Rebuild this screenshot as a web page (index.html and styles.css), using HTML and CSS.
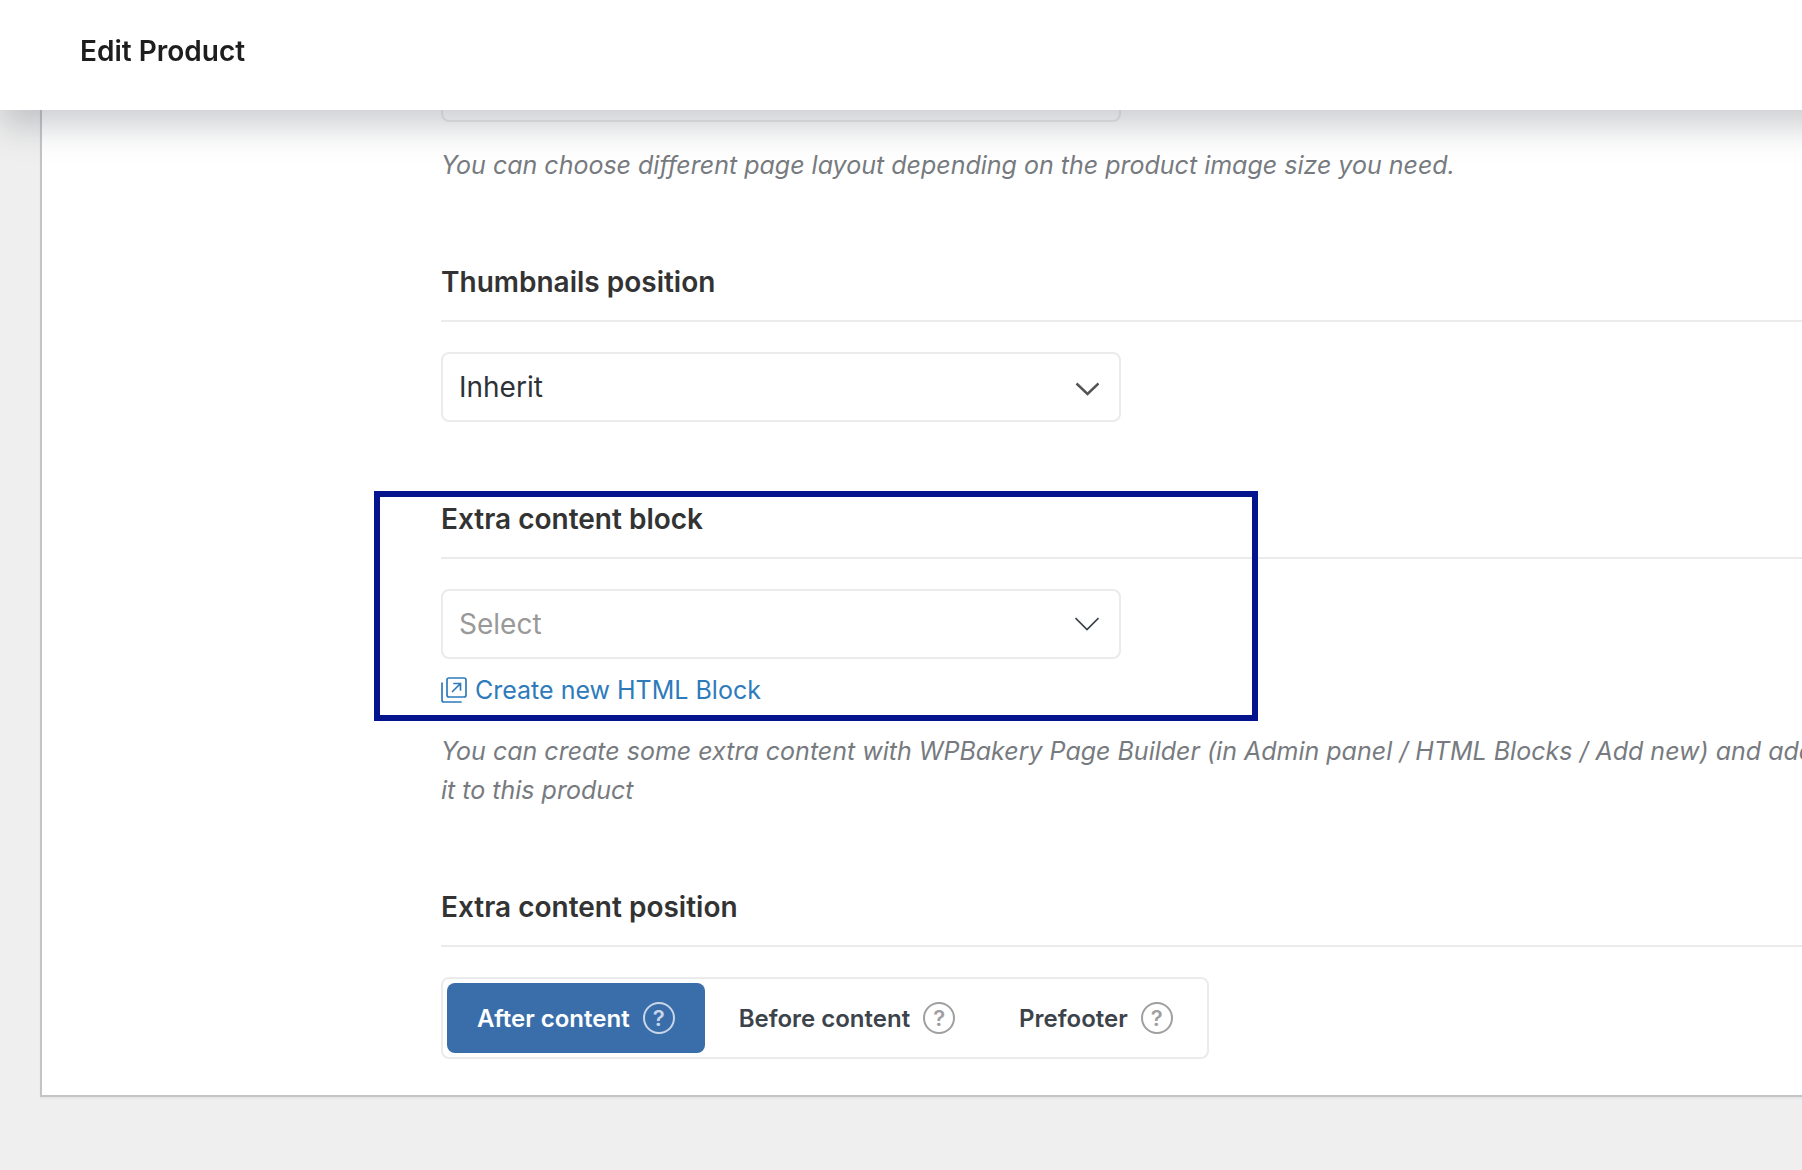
FILE: index.html
```html
<!DOCTYPE html>
<html lang="en">
<head>
<meta charset="utf-8">
<meta name="viewport" content="width=device-width, initial-scale=1">
<title>Edit Product</title>
<link rel="stylesheet" href="styles.css">
</head>
<body>
<header class="topbar">
  <h1 class="topbar-title">Edit Product</h1>
</header>
<main class="page">
  <form class="panel">
    <section class="field">
      <div class="select-wrap">
        <select class="select" aria-label="Product page layout"><option></option></select>
      </div>
      <p class="description">You can choose different page layout depending on the product image size you need.</p>
    </section>

    <section class="field">
      <label class="field-title" for="thumbs">Thumbnails position</label>
      <div class="select-wrap">
        <select class="select" id="thumbs"><option>Inherit</option></select>
        <svg class="chevron chevron-soft" viewBox="0 0 24 14" aria-hidden="true"><path d="M1.500 1.500 12.500 12 23.500 1.500"/></svg>
      </div>
    </section>

    <section class="field field-highlighted">
      <label class="field-title" for="block">Extra content block</label>
      <div class="select-wrap">
        <select class="select select-empty" id="block"><option>Select</option></select>
        <svg class="chevron" viewBox="0 0 24 14" aria-hidden="true"><path d="M.5 1 12 12.500 23.500 1"/></svg>
      </div>
      <a class="create-link" href="#">
        <svg class="link-icon" viewBox="0 0 26 26" aria-hidden="true">
          <rect x="6" y="1" width="19" height="19" rx="2"/>
          <path d="M1 6v17a2 2 0 0 0 2 2h17M11.500 14.500l8-8M13 6.500h6.500v6.500"/>
        </svg>
        <span>Create new HTML Block</span>
      </a>
      <p class="description">You can create some extra content with WPBakery Page Builder (in Admin panel / HTML Blocks / Add new) and add it to this product</p>
    </section>

    <section class="field">
      <h2 class="field-title">Extra content position</h2>
      <div class="button-set">
        <button class="option option-active" type="button">After content <span class="help">?</span></button>
        <button class="option" type="button">Before content <span class="help">?</span></button>
        <button class="option" type="button">Prefooter <span class="help">?</span></button>
      </div>
    </section>
  </form>
</main>
</body>
</html>
```
FILE: styles.css
```css
*,
*::after {
  box-sizing: border-box;
}

body {
  margin: 0;
  background: #efefef;
  color: #333;
  font-family: Inter, "Liberation Sans", sans-serif;
  overflow-x: hidden;
}

.topbar {
  position: fixed;
  top: 0;
  left: 0;
  right: -60px;
  z-index: 2;
  display: flex;
  align-items: center;
  height: 110px;
  padding: 0 80px 8px;
  background: #fff;
  box-shadow: 0 16px 32px rgba(85, 93, 102, 0.3);
}

.topbar-title {
  margin: 0;
  color: #1e1e1e;
  font-size: 28px;
  font-weight: 600;
  line-height: 40px;
}

.page {
  padding: 0 0 74px 40px;
  overflow: hidden;
}

.panel {
  display: flex;
  flex-direction: column;
  gap: 77px;
  margin-right: -20px;
  padding: 52px 0 36px 399px;
  border: 2px solid #c3c4c7;
  border-top: 0;
  background: #fff;
  box-shadow: 0 2px 2px rgba(0, 0, 0, 0.04);
}

.field-title {
  display: block;
  margin: 0 0 30px;
  padding-bottom: 18px;
  border-bottom: 2px solid #ebebeb;
  font-size: 28px;
  font-weight: 600;
  line-height: 40px;
}

.field-highlighted {
  position: relative;
}

.field-highlighted::after {
  content: "";
  position: absolute;
  top: -8px;
  left: -67px;
  width: 884px;
  height: 230px;
  border: 6px solid #04148c;
  pointer-events: none;
}

.select-wrap {
  display: grid;
  align-items: center;
  max-width: 680px;
}

.select {
  grid-area: 1 / 1;
  width: 100%;
  height: 70px;
  padding: 0 16px;
  border: 2px solid #ebebeb;
  border-radius: 8px;
  appearance: none;
  background: #fff;
  color: #2c3338;
  font-family: inherit;
  font-size: 28px;
}

.select-empty {
  color: #999;
}

.chevron {
  grid-area: 1 / 1;
  justify-self: end;
  width: 24px;
  height: 14px;
  margin-right: 22px;
  fill: none;
  stroke: #3c434a;
  stroke-width: 1.7;
  pointer-events: none;
}

.chevron-soft {
  margin-top: 4px;
  stroke: #555;
  stroke-width: 2.5;
}

.create-link {
  display: flex;
  align-items: center;
  gap: 8px;
  width: fit-content;
  margin-top: 13px;
  color: #2e7bbb;
  font-size: 25px;
  line-height: 36px;
  text-decoration: none;
}

.link-icon {
  width: 26px;
  height: 26px;
  fill: none;
  stroke: currentColor;
  stroke-width: 1.7;
  stroke-linecap: round;
}

.description {
  margin: 24px 0 0;
  color: #777b80;
  font-size: 25px;
  font-style: italic;
  line-height: 39px;
}

.button-set {
  display: flex;
  gap: 4px;
  width: fit-content;
  padding: 4px;
  border: 2px solid #ebebeb;
  border-radius: 8px;
}

.option {
  display: flex;
  align-items: center;
  gap: 13px;
  height: 70px;
  padding: 0 30px;
  border: 0;
  border-radius: 8px;
  background: none;
  color: #3c434a;
  font-family: inherit;
  font-size: 24px;
  font-weight: 600;
}

.option-active {
  background: #3a6eab;
  color: #fff;
}

.help {
  display: grid;
  place-items: center;
  width: 32px;
  height: 32px;
  border: 2px solid currentColor;
  border-radius: 50%;
  color: #9f9f9f;
  font-size: 22px;
}

.option-active .help {
  color: #c8d6e8;
}
```
